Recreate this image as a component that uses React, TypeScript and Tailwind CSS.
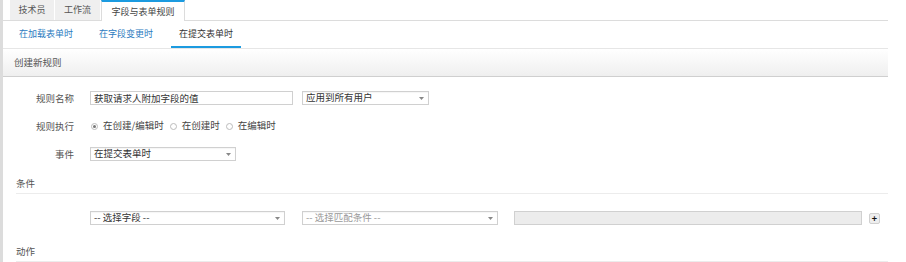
import React from "react";

const Arrow = () => (
  <svg width="5" height="3" viewBox="0 0 5 3" className="shrink-0">
    <path d="M0 0 L5 0 L2.5 3 Z" fill="#888" />
  </svg>
);

const Select = ({ w, text, muted }: { w: string; text: string; muted?: boolean }) => (
  <div className={`${w} h-[14px] border border-[#d0d0d0] bg-white flex items-center justify-between pl-[3px] pr-[4px] shadow-[inset_0_1px_1px_rgba(0,0,0,0.04)]`}>
    <span className={`${muted ? "text-[#999]" : "text-[#333]"} leading-none whitespace-nowrap`}>{text}</span>
    <Arrow />
  </div>
);

const Radio = ({ checked, label }: { checked?: boolean; label: string }) => (
  <div className="flex items-center gap-[5px]">
    <div className="w-[7px] h-[7px] rounded-full border border-[#bbb] bg-white flex items-center justify-center">
      {checked && <div className="w-[3px] h-[3px] rounded-full bg-[#777]" />}
    </div>
    <span className="text-[#444] leading-none">{label}</span>
  </div>
);

export default function App() {
  return (
    <div className="w-[906px] h-[262px] bg-white overflow-hidden text-[9.5px] font-['Microsoft_YaHei','Noto_Sans_CJK_SC',sans-serif]">
      <div className="flex h-full">
        <div className="w-[3px] bg-[#dcdcdc] shrink-0" />
        <div className="w-[885px] flex flex-col">
          {/* top tabs */}
          <div className="h-[21px] flex items-end border-b border-[#dcdcdc] pl-[7px] shrink-0 text-[9px]">
            <div className="h-[20px] w-[44px] bg-[#efefef] flex items-center justify-center text-[#555]">技术员</div>
            <div className="h-[20px] w-[45px] ml-px bg-[#efefef] flex items-center justify-center text-[#555]">工作流</div>
            <div className="h-[21px] w-[84px] ml-px -mb-px bg-white border-t-2 border-t-[#1c9be0] border-x border-x-[#dcdcdc] flex items-center justify-center text-[#444]">字段与表单规则</div>
          </div>
          {/* sub tabs */}
          <div className="h-[27px] flex items-stretch pl-[8px] gap-[10px] shrink-0 text-[9px]">
            <div className="px-[8px] flex items-center text-[#2b7bc0] border-b-2 border-transparent">在加载表单时</div>
            <div className="px-[8px] flex items-center text-[#2b7bc0] border-b-2 border-transparent">在字段变更时</div>
            <div className="px-[8px] flex items-center text-[#333] border-b-2 border-[#1c9be0]">在提交表单时</div>
          </div>
          {/* header */}
          <div className="h-[29px] border-t border-[#e6e6e6] border-b border-b-[#cfcfcf] bg-gradient-to-b from-white to-[#efefef] flex items-center pl-[11px] text-[#555] shrink-0">
            创建新规则
          </div>
          {/* form */}
          <div className="flex flex-col">
            <div className="flex items-center mt-[14px] h-[14px]">
              <div className="w-[71px] text-right text-[#555]">规则名称</div>
              <div className="ml-[16px] w-[203px] h-[14px] border border-[#d0d0d0] flex items-center pl-[3px] text-[#333]">获取请求人附加字段的值</div>
              <div className="ml-[9px]"><Select w="w-[127px]" text="应用到所有用户" /></div>
            </div>
            <div className="flex items-center mt-[14px] h-[14px]">
              <div className="w-[71px] text-right text-[#555]">规则执行</div>
              <div className="ml-[17px] flex items-center gap-[6px]">
                <Radio checked label="在创建/编辑时" />
                <Radio label="在创建时" />
                <Radio label="在编辑时" />
              </div>
            </div>
            <div className="flex items-center mt-[14px] h-[14px]">
              <div className="w-[71px] text-right text-[#555]">事件</div>
              <div className="ml-[16px]"><Select w="w-[146px]" text="在提交表单时" /></div>
            </div>
            <div className="ml-[13px] mt-[16px] h-[17px] border-b border-[#ececec] text-[#555] leading-[12px]">条件</div>
            <div className="flex items-center mt-[17px] h-[14px] pl-[87px]">
              <Select w="w-[195px]" text="-- 选择字段 --" />
              <div className="ml-[17px]"><Select w="w-[196px]" text="-- 选择匹配条件 --" muted /></div>
              <div className="ml-[16px] w-[348px] h-[14px] border border-[#d0d0d0] bg-[#ececec]" />
              <div className="ml-[7px] w-[11px] h-[11px] rounded-[2px] border border-[#d0d0d0] bg-[#eee] flex items-center justify-center text-[#111] text-[9px] leading-none font-bold">+</div>
            </div>
            <div className="ml-[13px] mt-[20px] h-[17px] border-b border-[#ececec] text-[#555] leading-[12px]">动作</div>
          </div>
        </div>
      </div>
    </div>
  );
}
